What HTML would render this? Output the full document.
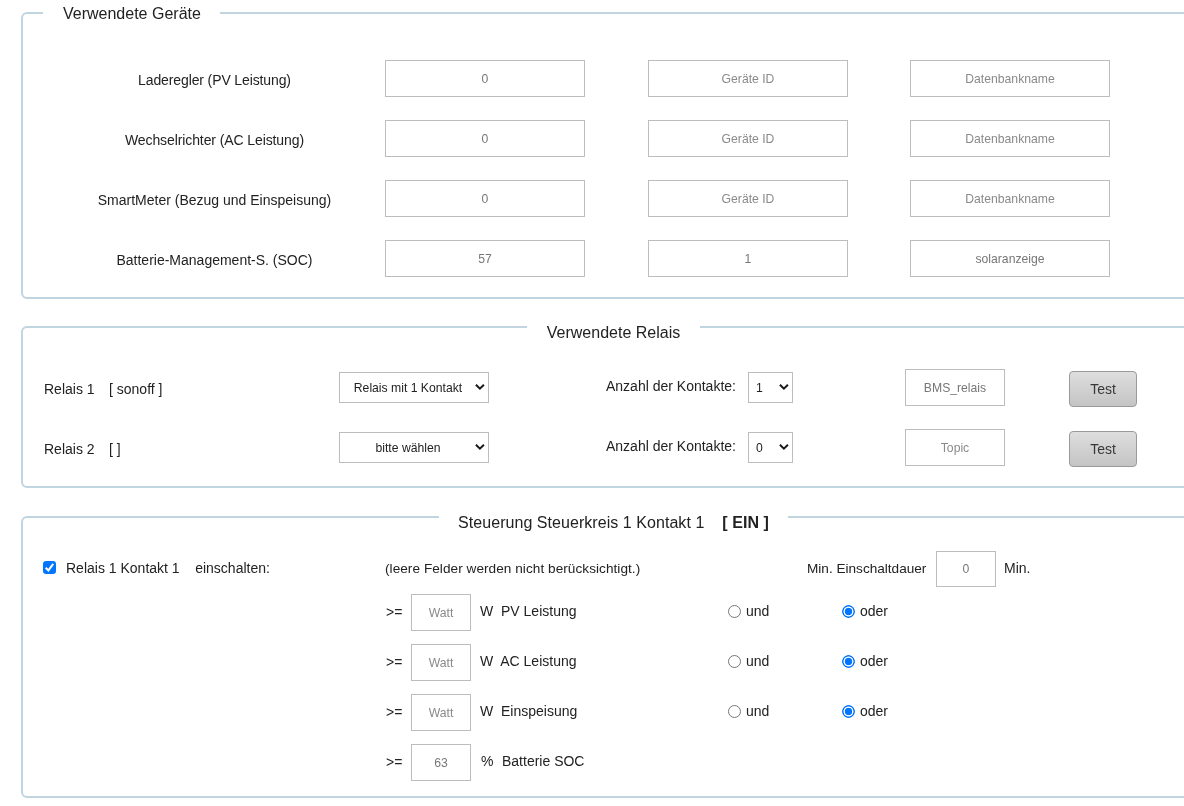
<!DOCTYPE html>
<html lang="de">
<head>
<meta charset="utf-8">
<title>Steuerung</title>
<style>
html,body{margin:0;padding:0;background:#fff;}
body{width:1184px;height:806px;overflow:hidden;position:relative;will-change:transform;background:transparent;font-family:"Liberation Sans",sans-serif;font-size:14px;color:#222;}
.fs{position:absolute;left:21px;width:1300px;border:2px solid #c1d5e0;border-radius:6px;box-sizing:border-box;}
.lg{position:absolute;background:#fff;font-size:16px;line-height:20px;height:20px;white-space:pre;color:#222;}
.t{position:absolute;white-space:pre;line-height:18px;height:18px;}
.c{text-align:center;}
.in{position:absolute;box-sizing:border-box;border:1px solid #bdbdbd;background:#fff;color:#777;font-size:12.2px;text-align:center;font-family:"Liberation Sans",sans-serif;}
.in span{position:absolute;left:0;right:0;top:50%;margin-top:-8px;line-height:16px;}
.ph{color:#8a8a8a;}
.sel{position:absolute;box-sizing:border-box;border:1px solid #bdbdbd;background:#fff;color:#222;font-size:12.2px;height:31px;line-height:29px;white-space:pre;}
.sel svg{position:absolute;right:3px;top:10px;}
.sel span{position:absolute;left:0;right:12px;top:1px;text-align:center;}
.btn{position:absolute;box-sizing:border-box;border:1px solid #9a9a9a;border-radius:4px;background:linear-gradient(#dedede,#c4c4c4);color:#383838;font-size:14px;text-align:center;width:68px;height:36px;line-height:34px;}
.rad{position:absolute;box-sizing:border-box;width:13px;height:13px;border-radius:50%;border:1px solid #767676;background:#fff;}
.rad.on{border:none;background:radial-gradient(circle at 50% 50%,#0075ff 0,#0075ff 3.4px,#fff 4.1px,#fff 4.7px,#0075ff 5.3px,#0075ff 6.2px,rgba(0,117,255,0) 6.8px);}
.chk{position:absolute;box-sizing:border-box;width:13px;height:13px;border-radius:3px;background:#0075ff;}
</style>
</head>
<body>

<!-- Fieldset 1 -->
<div class="fs" style="top:12px;height:287px;"></div>
<div class="lg" style="left:43px;top:4px;width:177px;padding-left:20px;box-sizing:border-box;">Verwendete Geräte</div>

<div class="t c" style="left:44px;width:341px;top:71px;letter-spacing:-0.12px;">Laderegler (PV Leistung)</div>
<div class="t c" style="left:44px;width:341px;top:131px;letter-spacing:-0.1px;">Wechselrichter (AC Leistung)</div>
<div class="t c" style="left:44px;width:341px;top:191px;">SmartMeter (Bezug und Einspeisung)</div>
<div class="t c" style="left:44px;width:341px;top:251px;">Batterie-Management-S. (SOC)</div>

<div class="in" style="left:385px;top:60px;width:200px;height:37px;"><span>0</span></div>
<div class="in" style="left:385px;top:120px;width:200px;height:37px;"><span>0</span></div>
<div class="in" style="left:385px;top:180px;width:200px;height:37px;"><span>0</span></div>
<div class="in" style="left:385px;top:240px;width:200px;height:37px;"><span>57</span></div>

<div class="in ph" style="left:648px;top:60px;width:200px;height:37px;"><span>Geräte ID</span></div>
<div class="in ph" style="left:648px;top:120px;width:200px;height:37px;"><span>Geräte ID</span></div>
<div class="in ph" style="left:648px;top:180px;width:200px;height:37px;"><span>Geräte ID</span></div>
<div class="in" style="left:648px;top:240px;width:200px;height:37px;"><span>1</span></div>

<div class="in ph" style="left:910px;top:60px;width:200px;height:37px;"><span>Datenbankname</span></div>
<div class="in ph" style="left:910px;top:120px;width:200px;height:37px;"><span>Datenbankname</span></div>
<div class="in ph" style="left:910px;top:180px;width:200px;height:37px;"><span>Datenbankname</span></div>
<div class="in" style="left:910px;top:240px;width:200px;height:37px;"><span>solaranzeige</span></div>

<!-- Fieldset 2 -->
<div class="fs" style="top:326px;height:162px;"></div>
<div class="lg c" style="left:527px;top:323px;width:173px;">Verwendete Relais</div>

<div class="t" style="left:44px;top:380px;">Relais 1</div><div class="t" style="left:109px;top:380px;">[ sonoff ]</div>
<div class="t" style="left:44px;top:440px;">Relais 2</div><div class="t" style="left:109px;top:440px;">[ ]</div>

<div class="sel" style="left:339px;top:372px;width:150px;"><span>Relais mit 1 Kontakt</span><svg width="11" height="8" viewBox="0 0 11 8"><path d="M1.9 1.8 L5.9 5.7 L9.9 1.8" fill="none" stroke="#1a1a1a" stroke-width="2"/></svg></div>
<div class="sel" style="left:339px;top:432px;width:150px;"><span>bitte wählen</span><svg width="11" height="8" viewBox="0 0 11 8"><path d="M1.9 1.8 L5.9 5.7 L9.9 1.8" fill="none" stroke="#1a1a1a" stroke-width="2"/></svg></div>

<div class="t" style="left:606px;top:377px;">Anzahl der Kontakte:</div>
<div class="t" style="left:606px;top:437px;">Anzahl der Kontakte:</div>

<div class="sel" style="left:748px;top:372px;width:45px;"><span style="text-align:left;left:7px;">1</span><svg width="11" height="8" viewBox="0 0 11 8"><path d="M1.9 1.8 L5.9 5.7 L9.9 1.8" fill="none" stroke="#1a1a1a" stroke-width="2"/></svg></div>
<div class="sel" style="left:748px;top:432px;width:45px;"><span style="text-align:left;left:7px;">0</span><svg width="11" height="8" viewBox="0 0 11 8"><path d="M1.9 1.8 L5.9 5.7 L9.9 1.8" fill="none" stroke="#1a1a1a" stroke-width="2"/></svg></div>

<div class="in" style="left:905px;top:369px;width:100px;height:37px;"><span>BMS_relais</span></div>
<div class="in ph" style="left:905px;top:429px;width:100px;height:37px;"><span>Topic</span></div>

<div class="btn" style="left:1069px;top:371px;">Test</div>
<div class="btn" style="left:1069px;top:431px;">Test</div>

<!-- Fieldset 3 -->
<div class="fs" style="top:516px;height:282px;"></div>
<div class="lg c" style="left:439px;top:513px;width:349px;letter-spacing:0.05px;">Steuerung Steuerkreis 1 Kontakt 1    <b>[ EIN ]</b></div>

<div class="chk" style="left:43px;top:561px;"><svg width="13" height="13" viewBox="0 0 13 13" style="position:absolute;left:0;top:0;"><path d="M2.7 6.7 L5.4 9.4 L10.2 2.9" fill="none" stroke="#fff" stroke-width="2"/></svg></div>
<div class="t" style="left:66px;top:559px;">Relais 1 Kontakt 1    einschalten:</div>
<div class="t" style="left:385px;top:560px;font-size:13.6px;letter-spacing:0.05px;">(leere Felder werden nicht berücksichtigt.)</div>
<div class="t" style="left:807px;top:560px;font-size:13.6px;">Min. Einschaltdauer</div>
<div class="in" style="left:936px;top:551px;width:60px;height:36px;"><span>0</span></div>
<div class="t" style="left:1004px;top:559px;">Min.</div>

<div class="t" style="left:386px;top:603px;">&gt;=</div>
<div class="in ph" style="left:411px;top:594px;width:60px;height:37px;"><span>Watt</span></div>
<div class="t" style="left:480px;top:602px;">W  PV Leistung</div>
<div class="rad" style="left:728px;top:605px;"></div><div class="t" style="left:746px;top:602px;">und</div>
<div class="rad on" style="left:842px;top:605px;"></div><div class="t" style="left:860px;top:602px;">oder</div>

<div class="t" style="left:386px;top:653px;">&gt;=</div>
<div class="in ph" style="left:411px;top:644px;width:60px;height:37px;"><span>Watt</span></div>
<div class="t" style="left:480px;top:652px;">W  AC Leistung</div>
<div class="rad" style="left:728px;top:655px;"></div><div class="t" style="left:746px;top:652px;">und</div>
<div class="rad on" style="left:842px;top:655px;"></div><div class="t" style="left:860px;top:652px;">oder</div>

<div class="t" style="left:386px;top:703px;">&gt;=</div>
<div class="in ph" style="left:411px;top:694px;width:60px;height:37px;"><span>Watt</span></div>
<div class="t" style="left:480px;top:702px;">W  Einspeisung</div>
<div class="rad" style="left:728px;top:705px;"></div><div class="t" style="left:746px;top:702px;">und</div>
<div class="rad on" style="left:842px;top:705px;"></div><div class="t" style="left:860px;top:702px;">oder</div>

<div class="t" style="left:386px;top:753px;">&gt;=</div>
<div class="in" style="left:411px;top:744px;width:60px;height:37px;"><span>63</span></div>
<div class="t" style="left:481px;top:752px;">%</div><div class="t" style="left:502px;top:752px;">Batterie SOC</div>

</body>
</html>
